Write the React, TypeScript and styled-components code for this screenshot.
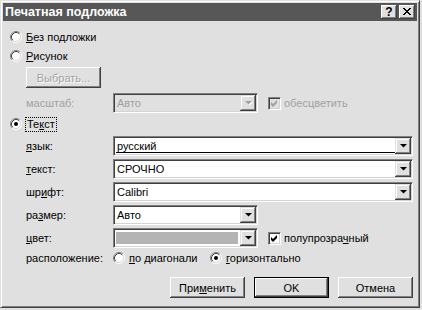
import React from 'react';
import styled, { createGlobalStyle, css } from 'styled-components';

const Global = createGlobalStyle`
  html, body { margin: 0; padding: 0; background: #e0e0e0; }
  body {
    font-family: "Liberation Sans", Arial, sans-serif;
    font-size: 11px;
    color: #000;
  }
  #root { width: 422px; height: 310px; }
`;

const BG = '#e0e0e0';
const DARK = '#404040';
const SHADOW = '#808080';
const LIGHT = '#d4d4d4';

const Window = styled.div`
  box-sizing: border-box;
  width: 420px;
  height: 308px;
  background: ${BG};
  border: 1px solid;
  border-color: ${BG} ${DARK} ${DARK} ${BG};
  box-shadow: inset 1px 1px #fff, inset -1px -1px ${SHADOW};
  padding: 2px;
  display: flex;
  flex-direction: column;
`;

const TitleBar = styled.div`
  height: 18px;
  background: #575757;
  display: flex;
  align-items: center;
  padding: 0 2px 0 2px;
`;

const Title = styled.div`
  flex: 1;
  color: #fff;
  font-weight: bold;
  font-size: 12.5px;
`;

const CapButton = styled.div`
  box-sizing: border-box;
  width: 16px;
  height: 14px;
  margin-left: 2px;
  background: ${BG};
  box-shadow: inset -1px -1px ${DARK}, inset 1px 1px #fff, inset -2px -2px ${SHADOW};
  display: flex;
  align-items: center;
  justify-content: center;
  font-weight: bold;
  font-size: 12px;
  line-height: 12px;
  padding-bottom: 1px;
`;

const Body = styled.div`
  flex: 1;
  display: flex;
  flex-direction: column;
  padding: 8px 4px 0 7px;
`;

const OptionRow = styled.div<{ $mt?: number }>`
  display: flex;
  align-items: center;
  height: 16px;
  margin-top: ${(p) => p.$mt ?? 0}px;
`;

const Option = styled.label<{ $w?: number }>`
  display: flex;
  align-items: center;
  gap: 4px;
  ${(p) => p.$w && css`width: ${p.$w}px;`}
`;

const Field = styled.div<{ $mt?: number; $h?: number }>`
  display: flex;
  align-items: center;
  height: ${(p) => p.$h ?? 20}px;
  margin-left: 16px;
  margin-top: ${(p) => p.$mt ?? 0}px;
`;

const Label = styled.span<{ $disabled?: boolean }>`
  width: 87px;
  flex: none;
  color: ${(p) => (p.$disabled ? '#a0a0a0' : '#000')};
`;

const U = styled.span`
  text-decoration: underline;
`;

const Focus = styled.span`
  outline: 1px dotted #000;
  outline-offset: 0;
  padding: 0 1px;
  line-height: 13px;
`;

const Combo = styled.div<{ $w?: number; $disabled?: boolean }>`
  box-sizing: border-box;
  height: 20px;
  ${(p) => (p.$w ? css`width: ${p.$w}px; flex: none;` : css`flex: 1;`)}
  border: 1px solid;
  border-color: ${SHADOW} #fff #fff ${SHADOW};
  box-shadow: inset 1px 1px ${DARK}, inset -1px -1px ${LIGHT};
  background: ${(p) => (p.$disabled ? BG : '#fff')};
  display: flex;
  padding: 1px;
  color: ${(p) => (p.$disabled ? '#a0a0a0' : '#000')};
`;

const ComboText = styled.div<{ $line?: boolean }>`
  flex: 1;
  display: flex;
  align-items: center;
  padding-left: 1px;
  margin: 1px 0 1px 1px;
  ${(p) => p.$line && css`box-shadow: inset 0 -1px #000; padding-bottom: 1px;`}
`;

const Swatch = styled.div`
  flex: 1;
  align-self: stretch;
  margin: 2px 2px 2px 1px;
  background: #b4b4b4;
`;

const DropButton = styled.div`
  box-sizing: border-box;
  width: 16px;
  height: 16px;
  flex: none;
  background: ${BG};
  box-shadow: inset -1px -1px ${DARK}, inset 1px 1px ${BG}, inset -2px -2px ${SHADOW}, inset 2px 2px #fff;
  display: flex;
  align-items: center;
  justify-content: center;
`;

const Check = styled.span<{ $disabled?: boolean }>`
  box-sizing: border-box;
  width: 13px;
  height: 13px;
  flex: none;
  border: 1px solid;
  border-color: ${SHADOW} #fff #fff ${SHADOW};
  box-shadow: inset 1px 1px ${DARK}, inset -1px -1px ${LIGHT};
  background: ${(p) => (p.$disabled ? BG : '#fff')};
  display: flex;
  align-items: center;
  justify-content: center;
`;

const CheckLabel = styled.label<{ $disabled?: boolean }>`
  display: flex;
  align-items: center;
  gap: 3px;
  margin-left: 10px;
  color: ${(p) => (p.$disabled ? '#a0a0a0' : '#000')};
`;

const Button = styled.button<{ $default?: boolean; $disabled?: boolean }>`
  box-sizing: border-box;
  width: 75px;
  height: 21px;
  padding: 0;
  margin: 0;
  font: inherit;
  background: ${BG};
  color: ${(p) => (p.$disabled ? '#a0a0a0' : '#000')};
  ${(p) => p.$disabled && css`text-shadow: 1px 1px #fff;`}
  border: ${(p) => (p.$default ? '1px solid #000' : 'none')};
  box-shadow: inset -1px -1px ${DARK}, inset 1px 1px #fff, inset -2px -2px ${SHADOW};
`;

const SelectRow = styled.div`
  margin-left: 16px;
  margin-top: 3px;
`;

const ButtonBar = styled.div`
  display: flex;
  justify-content: flex-end;
  gap: 9px;
  margin-top: 11px;
`;

const Radio: React.FC<{ checked?: boolean }> = ({ checked }) => (
  <svg width="12" height="12" viewBox="0 0 12 12" style={{ flex: 'none' }}>
    <circle cx="6" cy="6" r="5" fill="#fff" />
    <path d="M2.11 9.89 A5.5 5.5 0 0 1 9.89 2.11" fill="none" stroke={SHADOW} />
    <path d="M2.82 9.18 A4.5 4.5 0 0 1 9.18 2.82" fill="none" stroke={DARK} />
    <path d="M9.89 2.11 A5.5 5.5 0 0 1 2.11 9.89" fill="none" stroke="#fff" />
    <path d="M9.18 2.82 A4.5 4.5 0 0 1 2.82 9.18" fill="none" stroke={LIGHT} />
    {checked && <circle cx="6" cy="6" r="2" fill="#000" />}
  </svg>
);

const Tick: React.FC<{ color?: string }> = ({ color = '#000' }) => (
  <svg width="7" height="7" viewBox="0 0 7 7">
    <path d="M0 2 L2 4 L6 0 L6 3 L2 7 L0 5 Z" fill={color} />
  </svg>
);

const Arrow: React.FC<{ disabled?: boolean }> = ({ disabled }) => (
  <svg width="7" height="4" viewBox="0 0 7 4" style={{ overflow: 'visible' }}>
    {disabled && <path d="M1 1 H8 L4.5 4.5 Z" fill="#fff" />}
    <path d="M0 0 H7 L3.5 3.5 Z" fill={disabled ? '#a0a0a0' : '#000'} />
  </svg>
);

const CloseGlyph = () => (
  <svg width="8" height="7" viewBox="0 0 8 7">
    <path d="M0 0 L7 7 M1 0 L8 7 M7 0 L0 7 M8 0 L1 7" stroke="#000" strokeWidth="1" fill="none" shapeRendering="crispEdges" />
  </svg>
);

export default function App() {
  return (
    <>
      <Global />
      <Window>
        <TitleBar>
          <Title>Печатная подложка</Title>
          <CapButton>?</CapButton>
          <CapButton>
            <CloseGlyph />
          </CapButton>
        </TitleBar>
        <Body>
          <OptionRow>
            <Option>
              <Radio />
              <span>
                <U>Б</U>ез подложки
              </span>
            </Option>
          </OptionRow>
          <OptionRow $mt={3}>
            <Option>
              <Radio />
              <span>
                <U>Р</U>исунок
              </span>
            </Option>
          </OptionRow>
          <SelectRow>
            <Button $disabled>Выбрать...</Button>
          </SelectRow>
          <Field $mt={5}>
            <Label $disabled>масштаб:</Label>
            <Combo $w={145} $disabled>
              <ComboText>Авто</ComboText>
              <DropButton>
                <Arrow disabled />
              </DropButton>
            </Combo>
            <CheckLabel $disabled>
              <Check $disabled>
                <Tick color="#a0a0a0" />
              </Check>
              обесцветить
            </CheckLabel>
          </Field>
          <OptionRow $mt={3}>
            <Option>
              <Radio checked />
              <Focus>
                Те<U>к</U>ст
              </Focus>
            </Option>
          </OptionRow>
          <Field $mt={4}>
            <Label>
              <U>я</U>зык:
            </Label>
            <Combo>
              <ComboText $line>русский</ComboText>
              <DropButton>
                <Arrow />
              </DropButton>
            </Combo>
          </Field>
          <Field $mt={3}>
            <Label>
              <U>т</U>екст:
            </Label>
            <Combo>
              <ComboText>СРОЧНО</ComboText>
              <DropButton>
                <Arrow />
              </DropButton>
            </Combo>
          </Field>
          <Field $mt={3}>
            <Label>
              шр<U>и</U>фт:
            </Label>
            <Combo>
              <ComboText>Calibri</ComboText>
              <DropButton>
                <Arrow />
              </DropButton>
            </Combo>
          </Field>
          <Field $mt={3}>
            <Label>
              ра<U>з</U>мер:
            </Label>
            <Combo $w={145}>
              <ComboText>Авто</ComboText>
              <DropButton>
                <Arrow />
              </DropButton>
            </Combo>
          </Field>
          <Field $mt={3}>
            <Label>
              <U>ц</U>вет:
            </Label>
            <Combo $w={145}>
              <Swatch />
              <DropButton>
                <Arrow />
              </DropButton>
            </Combo>
            <CheckLabel>
              <Check>
                <Tick />
              </Check>
              <span>
                полупрозра<U>ч</U>ный
              </span>
            </CheckLabel>
          </Field>
          <Field $mt={2} $h={16}>
            <Label>расположение:</Label>
            <Option $w={97}>
              <Radio />
              <span>
                <U>п</U>о диагонали
              </span>
            </Option>
            <Option>
              <Radio checked />
              <span>
                <U>г</U>оризонтально
              </span>
            </Option>
          </Field>
          <ButtonBar>
            <Button>
              При<U>м</U>енить
            </Button>
            <Button $default>OK</Button>
            <Button>Отмена</Button>
          </ButtonBar>
        </Body>
      </Window>
    </>
  );
}
